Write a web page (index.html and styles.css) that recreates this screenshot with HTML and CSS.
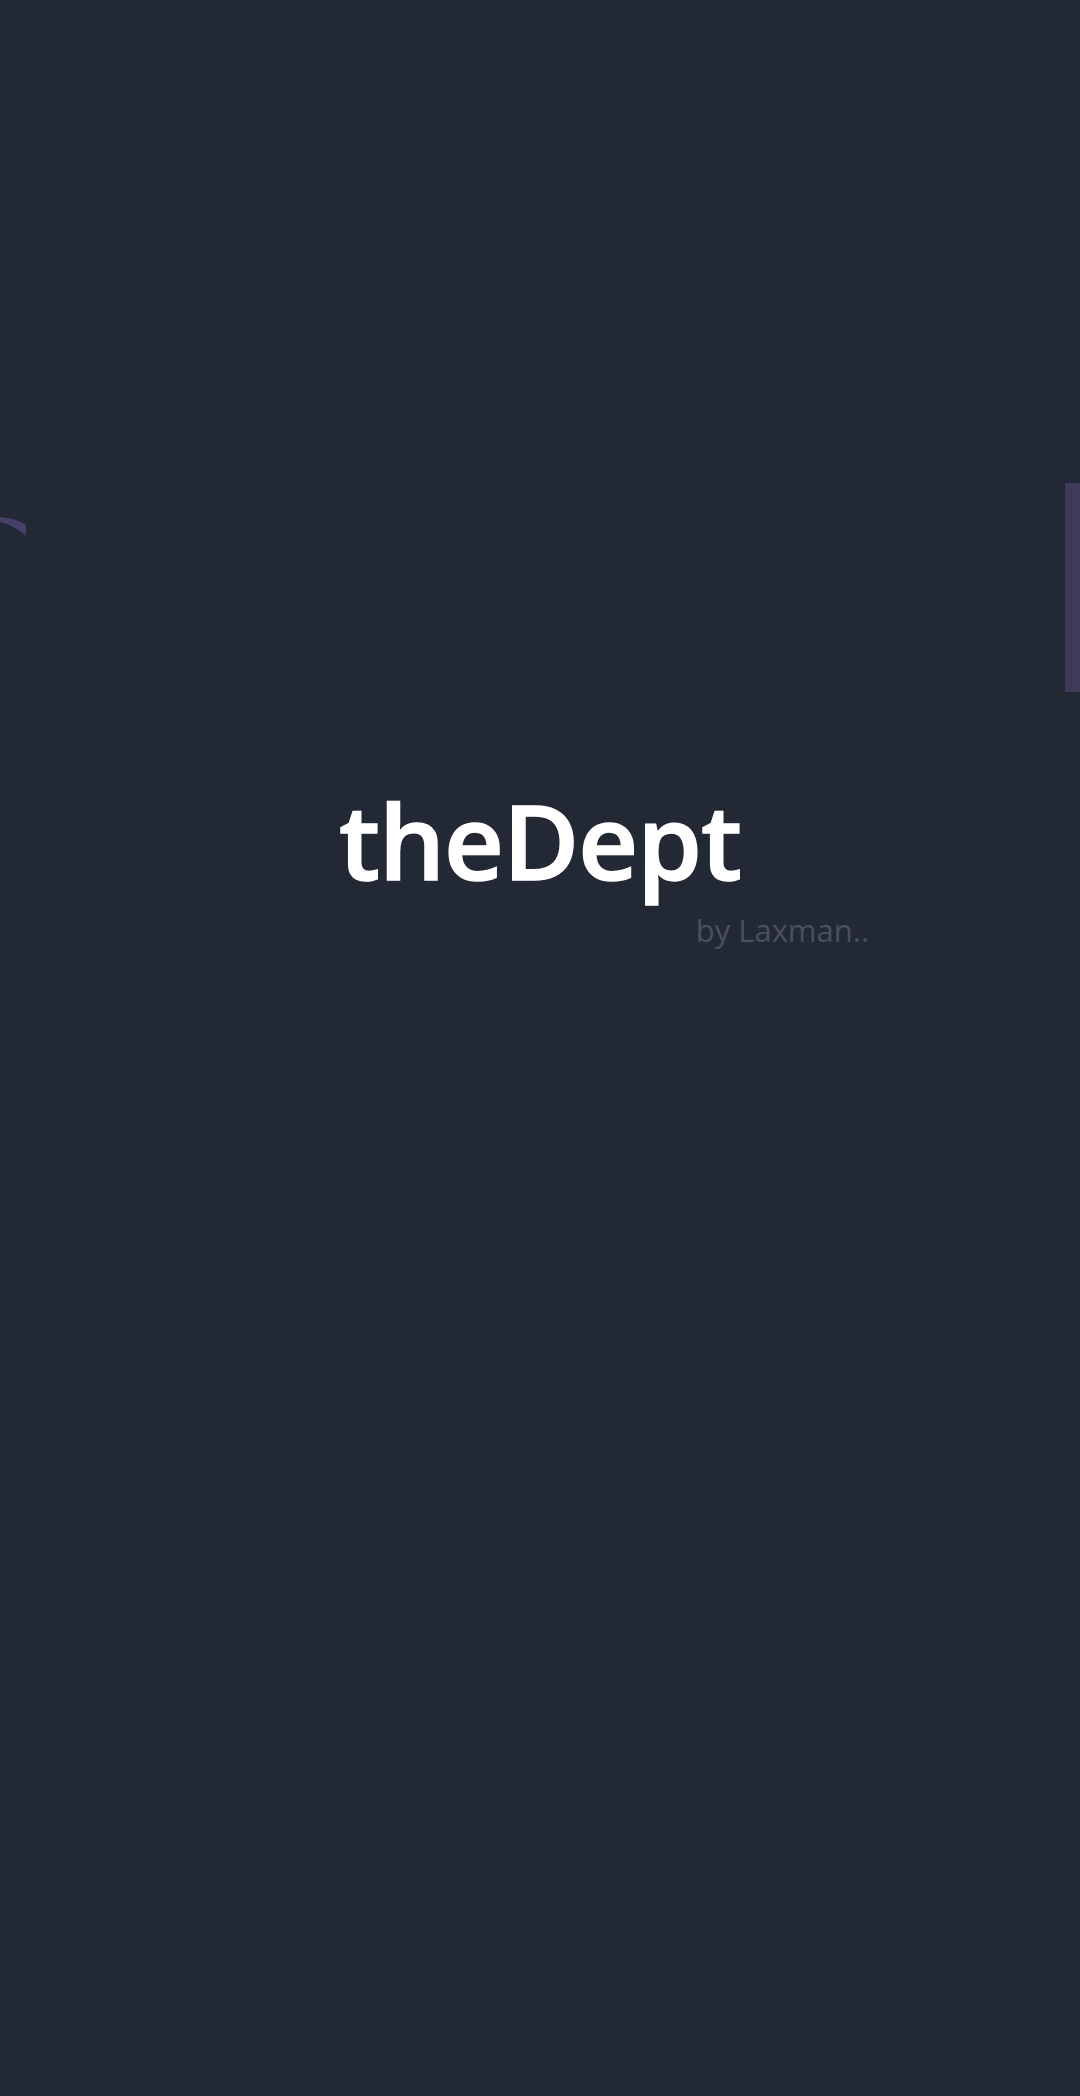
FILE: index.html
```html
<!DOCTYPE html>
<html>
<head>
<meta charset="utf-8">
<link rel="stylesheet" href="styles.css">
</head>
<body>
<div class="screen">
  <svg class="wedge" width="30" height="26" viewBox="0 0 30 26"><path d="M0 5 Q16 6 26 13 L26 24 Q14 13 0 10 Z" fill="#474169"/></svg>
  <div class="sidebar-tab"></div>
  <div class="brand">
    <h1 class="title">theDept</h1>
    <p class="byline">by Laxman..</p>
  </div>
</div>
</body>
</html>
```
FILE: styles.css
```css
html, body {
  margin: 0;
  padding: 0;
  background: #222834;
}
.screen {
  position: relative;
  width: 1080px;
  height: 2096px;
  background: #222834;
  overflow: hidden;
  display: flex;
  flex-direction: column;
  align-items: center;
}
.wedge {
  position: absolute;
  left: 0;
  top: 512px;
}
.sidebar-tab {
  position: absolute;
  right: 0;
  top: 483px;
  width: 15px;
  height: 209px;
  background: #3f3a57;
}
.brand {
  margin-top: 770px;
  display: flex;
  flex-direction: column;
  align-items: center;
  position: relative;
}
.title {
  margin: 0;
  font-family: "Open Sans", sans-serif;
  font-weight: 600;
  font-size: 104px;
  line-height: 140px;
  color: #ffffff;
  letter-spacing: -1px;
  -webkit-text-stroke: 1.5px #ffffff;
}
.byline {
  margin: 0;
  align-self: flex-end;
  margin-right: -128px;
  font-family: "Open Sans", sans-serif;
  font-size: 31px;
  line-height: 40px;
  color: #4a505c;
}
```
